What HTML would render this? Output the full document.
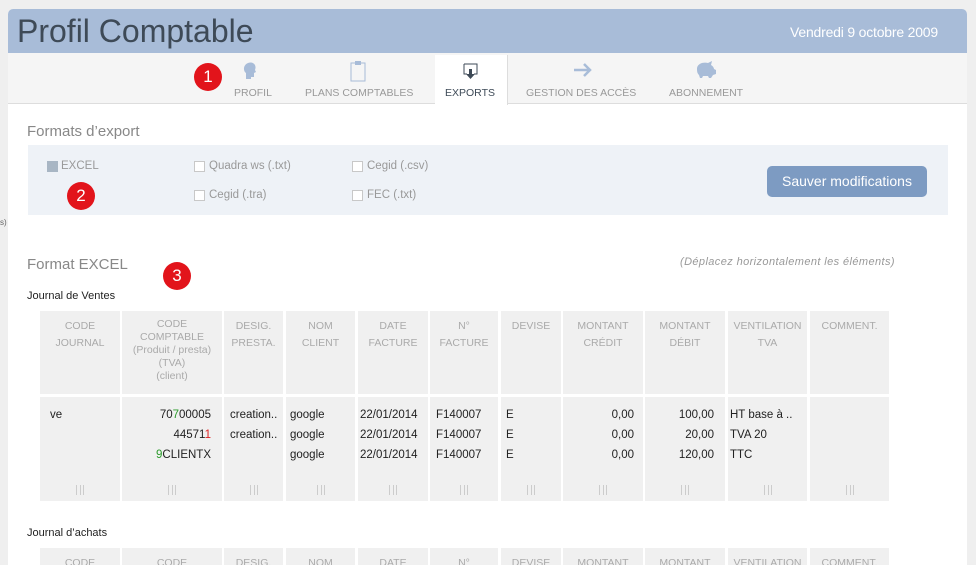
<!DOCTYPE html>
<html style="overflow:hidden;height:565px"><head><meta charset="utf-8"><style>
*{margin:0;padding:0;box-sizing:border-box}
body{width:976px;height:565px;background:#efefef;font-family:"Liberation Sans",sans-serif;position:relative;overflow:hidden}
.a{position:absolute}
#panel{left:8px;top:9px;width:959px;height:556px;background:#fff;border-radius:5px 5px 0 0}
#hdr{left:8px;top:9px;width:959px;height:44px;background:#a8bcd8;border-radius:5px 5px 0 0}
#tabs{left:8px;top:53px;width:959px;height:51px;background:#f5f5f5;border-bottom:1px solid #ddd}
.tab{font-size:10.5px;color:#999;top:87px}
.badge{width:28px;height:28px;border-radius:50%;background:#e2141b;color:#fff;font-size:17px;text-align:center;line-height:28px}
.cb{width:11px;height:11px;border:1px solid #c8c8c8;background:#fff}
.lbl{font-size:11.5px;color:#999}
.cell{background:#f0f0f0}
.h{font-size:10.5px;color:#aaa;text-align:center;line-height:16.5px;padding-top:7px}
.d{font-size:11.5px;color:#222;line-height:20px;padding-top:8px}
.grip{position:absolute;bottom:6px;left:50%;margin-left:-4px;width:8px;height:10px;border-left:1px solid #ccc;border-right:1px solid #ccc}
.grip:after{content:"";position:absolute;left:3px;top:0;width:1px;height:10px;background:#ccc}
</style></head><body>
<div class="a" id="panel"></div>
<div class="a" id="hdr"></div>
<div class="a" style="left:17px;top:13px;font-size:32px;color:#3e4a57">Profil Comptable</div>
<div class="a" style="left:790px;top:24px;font-size:14px;color:#fff;letter-spacing:-0.2px">Vendredi 9 octobre 2009</div>
<div class="a" id="tabs"></div>
<div class="a" style="left:435px;top:55px;width:73px;height:50px;background:#fff;border-right:1px solid #ddd"></div>
<div class="a badge" style="left:194px;top:63px">1</div>
<svg class="a" style="left:242px;top:61px" width="16" height="20"><path d="M4 18 L4 12 C1 10 1 4 6 2 C11 0 15 4 13 9 L14 11 L12 12 L12 16 L9 16 L9 18Z" fill="#a8bcd8"/></svg>
<div class="a tab" style="left:234px">PROFIL</div>
<svg class="a" style="left:349px;top:60px" width="18" height="22"><rect x="2" y="3" width="14" height="18" fill="none" stroke="#a8bcd8"/><rect x="6" y="1" width="6" height="4" fill="#a8bcd8"/></svg>
<div class="a tab" style="left:305px">PLANS COMPTABLES</div>
<svg class="a" style="left:463px;top:63px" width="16" height="18"><path d="M1 1 H14 V11 H11 M4 11 H1 V1" fill="none" stroke="#3e4a57"/><path d="M6 6 H9 V11 H12 L7.5 16 L3 11 H6Z" fill="#3e4a57"/></svg>
<div class="a tab" style="left:445px;color:#3e4a57">EXPORTS</div>
<svg class="a" style="left:573px;top:62px" width="20" height="16"><path d="M1 8 H17 M11 2 L17 8 L11 14" fill="none" stroke="#a8bcd8" stroke-width="2.5"/></svg>
<div class="a tab" style="left:526px">GESTION DES ACCÈS</div>
<svg class="a" style="left:694px;top:60px" width="24" height="22"><path d="M3 8 C4 3 10 2 14 3 L18 1 L17 5 C19 6 20 8 20 9 L22 10 L22 14 L19 15 L17 18 L15 18 L14 16 L9 16 L8 18 L6 18 L5 15 C3 13 3 11 3 8Z" fill="#a8bcd8"/></svg>
<div class="a tab" style="left:669px">ABONNEMENT</div>

<div class="a" style="left:27px;top:123px;font-size:15px;color:#888">Formats d’export</div>
<div class="a" style="left:28px;top:145px;width:920px;height:70px;background:#eef2f7"></div>
<div class="a" style="left:47px;top:161px;width:11px;height:11px;background:#a8b6c4"></div>
<div class="a lbl" style="left:61px;top:160px">EXCEL</div>
<div class="a cb" style="left:194px;top:161px"></div><div class="a lbl" style="left:209px;top:160px">Quadra ws (.txt)</div>
<div class="a cb" style="left:352px;top:161px"></div><div class="a lbl" style="left:367px;top:160px">Cegid (.csv)</div>
<div class="a cb" style="left:194px;top:190px"></div><div class="a lbl" style="left:209px;top:189px">Cegid (.tra)</div>
<div class="a cb" style="left:352px;top:190px"></div><div class="a lbl" style="left:367px;top:189px">FEC (.txt)</div>
<div class="a badge" style="left:67px;top:182px">2</div>
<div class="a" style="left:767px;top:166px;width:160px;height:31px;background:#7d9bc2;border-radius:5px;color:#fff;font-size:14px;text-align:center;line-height:31px">Sauver modifications</div>
<div class="a" style="left:0;top:218px;font-size:8px;color:#666">s)</div>

<div class="a" style="left:27px;top:256px;font-size:15px;color:#888">Format EXCEL</div>
<div class="a badge" style="left:163px;top:262px">3</div>
<div class="a" style="left:680px;top:256px;font-size:11px;color:#999;font-style:italic;letter-spacing:0.4px">(Déplacez horizontalement les éléments)</div>
<div class="a" style="left:27px;top:290px;font-size:11px;color:#222">Journal de Ventes</div>

<div class="a cell h" style="left:40px;top:311px;width:80px;height:83px">CODE<br>JOURNAL</div>
<div class="a cell h" style="left:122px;top:311px;width:100px;height:83px;line-height:13px">CODE<br>COMPTABLE<br>(Produit / presta)<br>(TVA)<br>(client)</div>
<div class="a cell h" style="left:224px;top:311px;width:59px;height:83px">DESIG.<br>PRESTA.</div>
<div class="a cell h" style="left:286px;top:311px;width:69px;height:83px">NOM<br>CLIENT</div>
<div class="a cell h" style="left:358px;top:311px;width:70px;height:83px">DATE<br>FACTURE</div>
<div class="a cell h" style="left:430px;top:311px;width:68px;height:83px">N°<br>FACTURE</div>
<div class="a cell h" style="left:501px;top:311px;width:60px;height:83px">DEVISE</div>
<div class="a cell h" style="left:563px;top:311px;width:80px;height:83px">MONTANT<br>CRÉDIT</div>
<div class="a cell h" style="left:645px;top:311px;width:80px;height:83px">MONTANT<br>DÉBIT</div>
<div class="a cell h" style="left:728px;top:311px;width:79px;height:83px">VENTILATION<br>TVA</div>
<div class="a cell h" style="left:810px;top:311px;width:79px;height:83px">COMMENT.</div>

<div class="a cell d" style="left:40px;top:397px;width:80px;height:104px;padding-left:10px">ve<div class="grip"></div></div>
<div class="a cell d" style="left:122px;top:397px;width:100px;height:104px;text-align:right;padding-right:11px">70<span style="color:#2a9a2a">7</span>00005<br>44571<span style="color:#d22">1</span><br><span style="color:#2a9a2a">9</span>CLIENTX<div class="grip"></div></div>
<div class="a cell d" style="left:224px;top:397px;width:59px;height:104px;padding-left:6px">creation..<br>creation..<div class="grip"></div></div>
<div class="a cell d" style="left:286px;top:397px;width:69px;height:104px;padding-left:4px">google<br>google<br>google<div class="grip"></div></div>
<div class="a cell d" style="left:358px;top:397px;width:70px;height:104px;padding-left:2px">22/01/2014<br>22/01/2014<br>22/01/2014<div class="grip"></div></div>
<div class="a cell d" style="left:430px;top:397px;width:68px;height:104px;padding-left:6px">F140007<br>F140007<br>F140007<div class="grip"></div></div>
<div class="a cell d" style="left:501px;top:397px;width:60px;height:104px;padding-left:5px">E<br>E<br>E<div class="grip"></div></div>
<div class="a cell d" style="left:563px;top:397px;width:80px;height:104px;text-align:right;padding-right:9px">0,00<br>0,00<br>0,00<div class="grip"></div></div>
<div class="a cell d" style="left:645px;top:397px;width:80px;height:104px;text-align:right;padding-right:11px">100,00<br>20,00<br>120,00<div class="grip"></div></div>
<div class="a cell d" style="left:728px;top:397px;width:79px;height:104px;padding-left:2px">HT base à ..<br>TVA 20<br>TTC<div class="grip"></div></div>
<div class="a cell d" style="left:810px;top:397px;width:79px;height:104px"><div class="grip"></div></div>

<div class="a" style="left:27px;top:527px;font-size:11px;color:#222">Journal d’achats</div>
<div class="a cell h" style="left:40px;top:548px;width:80px;height:17px">CODE</div>
<div class="a cell h" style="left:122px;top:548px;width:100px;height:17px">CODE</div>
<div class="a cell h" style="left:224px;top:548px;width:59px;height:17px">DESIG.</div>
<div class="a cell h" style="left:286px;top:548px;width:69px;height:17px">NOM</div>
<div class="a cell h" style="left:358px;top:548px;width:70px;height:17px">DATE</div>
<div class="a cell h" style="left:430px;top:548px;width:68px;height:17px">N°</div>
<div class="a cell h" style="left:501px;top:548px;width:60px;height:17px">DEVISE</div>
<div class="a cell h" style="left:563px;top:548px;width:80px;height:17px">MONTANT</div>
<div class="a cell h" style="left:645px;top:548px;width:80px;height:17px">MONTANT</div>
<div class="a cell h" style="left:728px;top:548px;width:79px;height:17px">VENTILATION</div>
<div class="a cell h" style="left:810px;top:548px;width:79px;height:17px">COMMENT.</div>
</body></html>
